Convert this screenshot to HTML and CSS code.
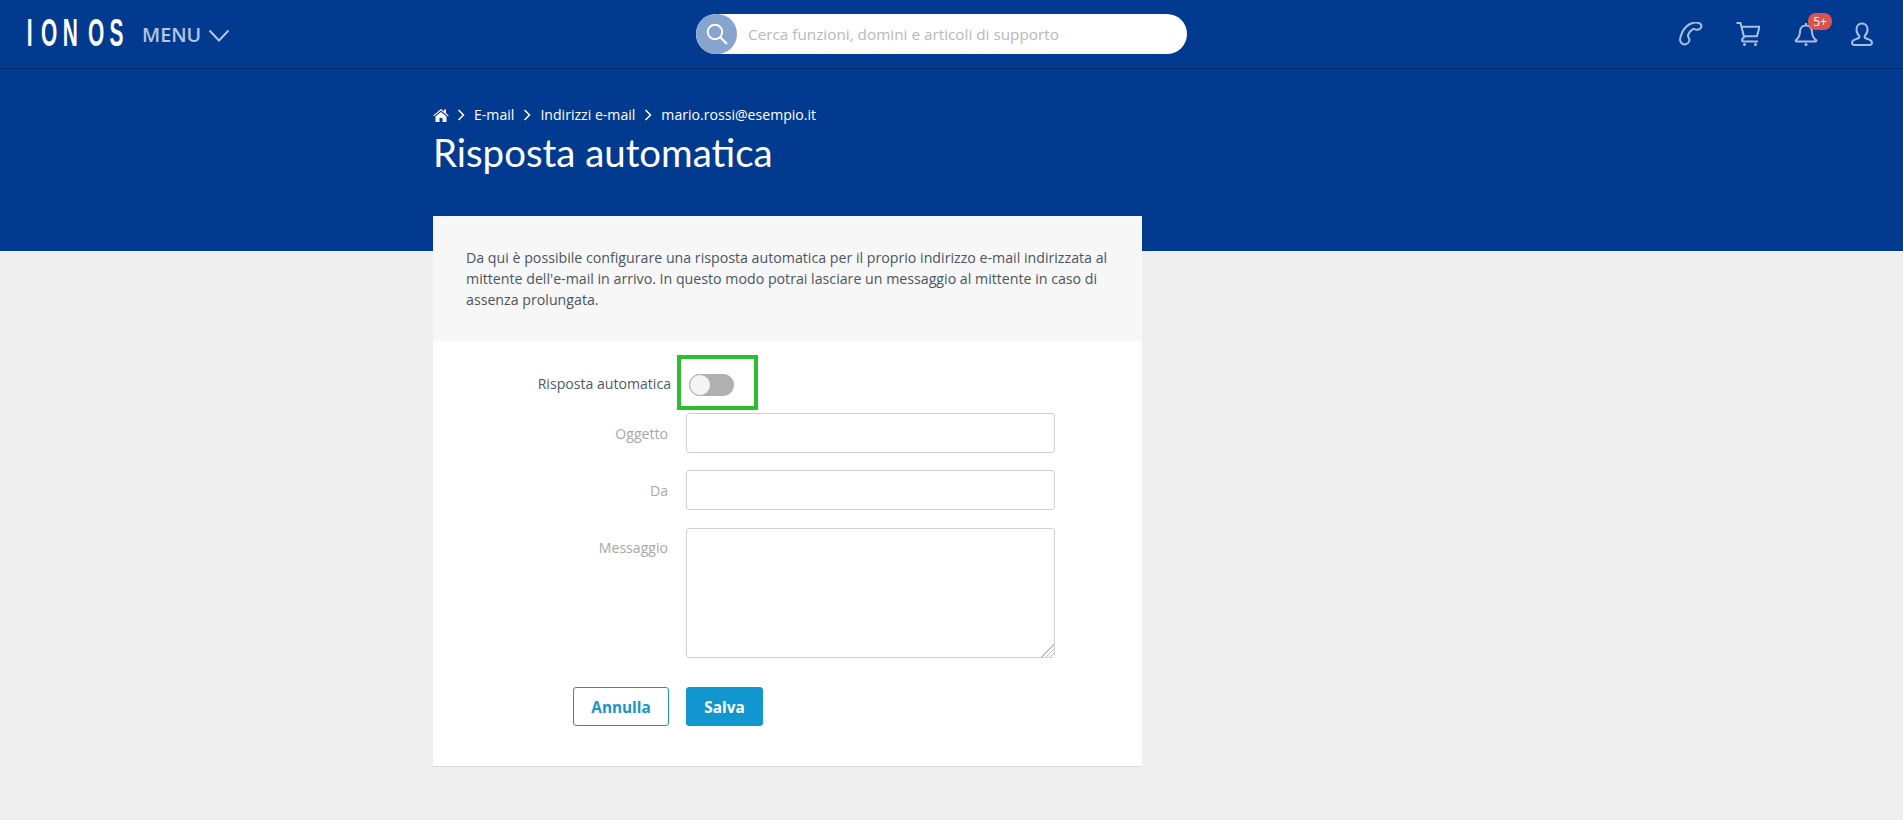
FILE: index.html
```html
<!DOCTYPE html>
<html lang="it">
<head>
<meta charset="utf-8">
<title>Risposta automatica</title>
<link rel="stylesheet" href="styles.css">
</head>
<body>
<header class="topbar">
  <div class="brand">
    <svg class="logo" width="100" height="30" viewBox="0 0 100 30" role="img" aria-label="IONOS">
      <g transform="scale(.55 1)">
        <text x="-2.400 23.600 63 109 148" y="28" class="logo-text">IONOS</text>
      </g>
    </svg>
    <span class="menu-label">MENU</span>
    <svg class="menu-chevron" width="22" height="13" viewBox="0 0 22 13"><path d="M1.500 1.500 11 11.500 20.500 1.500"/></svg>
  </div>
  <div class="search">
    <span class="search-btn">
      <svg width="24" height="24" viewBox="0 0 24 24"><circle cx="10" cy="10" r="7.200"/><path d="M15.200 15.200 22 22"/></svg>
    </span>
    <span class="search-placeholder">Cerca funzioni, domini e articoli di supporto</span>
  </div>
  <nav class="tools">
    <svg class="tool" width="24" height="24" viewBox="0 0 24 24"><path d="M11 2C14.500.5 19 0 21.500 2 23.500 4 22 7.500 18.500 7.800 16.500 8 15.500 6.500 14 7.200 12 8.200 10 10.500 9 13 8.500 14.500 10.500 16 10.500 18 10.500 21 7 23 4.500 22.300 1.500 21.500.5 18.500 1.500 15 3 9.500 7 4 11 2Z"/></svg>
    <svg class="tool" width="24" height="24" viewBox="0 0 24 24"><path d="M.5 1h4l3.800 15M5.500 4.800h18l-2.500 9.400H7.800M8.300 16c-3 .3-3 3.500 0 3.600H22"/><circle class="dot" cx="8.500" cy="22.500" r="1.500"/><circle class="dot" cx="19.500" cy="22.500" r="1.500"/></svg>
    <span class="bell">
      <svg class="tool" width="24" height="24" viewBox="0 0 24 24"><path d="M12 3.500c-4 0-6 2.800-6 6.200 0 4.300-1 5.800-4 8.300-.6.600-.3 1.500.5 1.500h19c.8 0 1.100-.9.500-1.500-3-2.500-4-4-4-8.300 0-3.400-2-6.200-6-6.200ZM12 1v2.500"/><circle class="dot" cx="12" cy="22.500" r="1.500"/></svg>
      <span class="badge">5+</span>
    </span>
    <svg class="tool" width="24" height="24" viewBox="0 0 24 24"><path d="M12 1.500c-3.700 0-5.500 2.800-5.500 6 0 2.500 1 4.700 2.500 6 .6.600.5 2-.3 2.500C6 17.300 2 18 2 20.500c0 1.500 1 2.500 3 2.500h14c2 0 3-1 3-2.500 0-2.500-4-3.200-6.700-4.500-.8-.5-.9-1.900-.3-2.500 1.500-1.300 2.500-3.500 2.500-6 0-3.200-1.800-6-5.500-6Z"/></svg>
  </nav>
</header>

<section class="hero">
  <div class="crumbs">
    <svg class="home" width="16" height="14" viewBox="0 0 16 14"><path d="M8 1 .3 7.400l.8.900L8 2.600l6.900 5.700.8-.9L13 5.200V1.500h-2v2L8 1ZM2.500 8.400V14h4V10h3v4h4V8.400L8 3.900 2.500 8.400Z"/></svg>
    <svg class="crumb-sep" width="8" height="12" viewBox="0 0 8 12"><path d="M1.500 1 6.500 6 1.500 11"/></svg>
    <span>E-mail</span>
    <svg class="crumb-sep" width="8" height="12" viewBox="0 0 8 12"><path d="M1.500 1 6.500 6 1.500 11"/></svg>
    <span>Indirizzi e-mail</span>
    <svg class="crumb-sep" width="8" height="12" viewBox="0 0 8 12"><path d="M1.500 1 6.500 6 1.500 11"/></svg>
    <span>mario.rossi@esempio.it</span>
  </div>
  <h1 class="title">Risposta automatica</h1>
</section>

<main class="card">
  <p class="intro">Da qui è possibile configurare una risposta automatica per il proprio indirizzo e-mail indirizzata al mittente dell'e-mail in arrivo. In questo modo potrai lasciare un messaggio al mittente in caso di assenza prolungata.</p>
  <form class="form">
    <div class="row row-toggle">
      <label class="label label-on">Risposta automatica</label>
      <span class="toggle"><span class="knob"></span></span>
      <span class="highlight"></span>
    </div>
    <div class="row">
      <label class="label" for="subject">Oggetto</label>
      <input class="field" id="subject" type="text">
    </div>
    <div class="row row-second">
      <label class="label" for="from">Da</label>
      <input class="field" id="from" type="text">
    </div>
    <div class="row row-top">
      <label class="label" for="msg">Messaggio</label>
      <textarea class="field area" id="msg"></textarea>
    </div>
    <div class="actions">
      <button class="btn btn-ghost" type="button">Annulla</button>
      <button class="btn btn-solid" type="button">Salva</button>
    </div>
  </form>
</main>
</body>
</html>
```
FILE: styles.css
```css
* { box-sizing: border-box; }
html, body { margin: 0; padding: 0; }
body {
  min-height: 820px;
  background: #efefef;
  font-family: "Open Sans", "Liberation Sans", sans-serif;
  font-size: 14.100px;
  color: #4a5560;
  overflow: hidden;
}
.topbar {
  display: grid;
  grid-template-columns: 696px 491px 1fr;
  align-items: center;
  height: 69px;
  background: #023a8f;
  border-bottom: 1px solid #012a6b;
}
.brand { display: flex; align-items: center; padding-left: 28px; }
.logo { margin-top: -3px; overflow: visible; }
.logo-text {
  font-family: "Liberation Sans", sans-serif;
  font-size: 38px;
  font-weight: 700;
  fill: #fff;
}
.menu-label {
  margin-left: 14px;
  font-size: 19.700px;
  font-weight: 600;
  color: #b4c6e2;
}
.menu-chevron { margin-left: 7px; margin-top: 2px; }
.menu-chevron path { fill: none; stroke: #b4c6e2; stroke-width: 2; }
.search {
  display: flex;
  align-items: center;
  height: 40px;
  background: #fff;
  border-radius: 20px;
}
.search-btn {
  display: flex;
  align-items: center;
  justify-content: center;
  width: 41px;
  height: 40px;
  border-radius: 20px;
  background: #87a4cf;
}
.search-btn svg { fill: none; stroke: #fff; stroke-width: 2; }
.search-placeholder { margin-left: 11px; font-size: 15.300px; color: #b9b9b9; }
.tools {
  display: flex;
  align-items: center;
  justify-content: flex-end;
  gap: 33px;
  padding-right: 29px;
}
.tool { display: block; fill: none; stroke: #a9c0e2; stroke-width: 2; }
.tool .dot { fill: #a9c0e2; stroke: none; }
.bell { position: relative; display: block; left: 1px; }
.badge {
  position: absolute;
  left: 14px;
  top: -9px;
  width: 24px;
  height: 17px;
  border-radius: 8px;
  background: #d9534f;
  color: #fff;
  font-size: 12px;
  line-height: 17px;
  text-align: center;
}
.hero {
  height: 182px;
  padding: 36px 0 0 433px;
  background: #023a8f;
  color: #fff;
}
.crumbs { display: flex; align-items: center; gap: 9px; height: 19px; }
.home { fill: #fff; margin-right: -1px; }
.crumb-sep { fill: none; stroke: #fff; stroke-width: 1.500; }
.title {
  margin: 4px 0 0;
  font-family: "Lato", sans-serif;
  font-size: 38.400px;
  font-weight: 400;
  line-height: 48px;
}
.card {
  position: relative;
  width: 709px;
  margin: -35px 0 0 433px;
  background: #fff;
  border-bottom: 1px solid #dcdcdc;
}
.intro {
  margin: 0;
  padding: 31px 28px 31px 33px;
  background: #f7f7f7;
  font-size: 14.200px;
  line-height: 21px;
}
.form { padding: 33px 0 40px; }
.row {
  display: grid;
  grid-template-columns: 235px 369px;
  column-gap: 18px;
  align-items: center;
  margin-bottom: 17px;
}
.row-second { margin-bottom: 18px; }
.row-top { align-items: start; margin-bottom: 29px; }
.row-top .label { padding-top: 10px; }
.row-toggle {
  position: relative;
  grid-template-columns: 238px 45px;
}
.label { padding-top: 2px; text-align: right; color: #a8a8a8; line-height: 20px; }
.label-on { color: #4f5a63; padding-top: 0; padding-bottom: 2px; }
.toggle {
  display: block;
  width: 45px;
  height: 22px;
  border-radius: 11px;
  background: #b0b0b0;
}
.knob {
  display: block;
  width: 22px;
  height: 22px;
  border-radius: 50%;
  background: #f4f4f4;
  border: 1px solid #b0b0b0;
}
.highlight {
  position: absolute;
  left: 244px;
  top: -19px;
  width: 81px;
  height: 55px;
  border: 4px solid #2dbe2d;
}
.field {
  display: block;
  width: 369px;
  height: 40px;
  background: #fff;
  border: 1px solid #d0d0d0;
  border-radius: 3px;
  font-family: inherit;
}
.area { height: 130px; margin: 0; }
.area::-webkit-resizer {
  background:
    linear-gradient(135deg, #fff 50%, transparent 50%),
    repeating-linear-gradient(135deg, #bdbdbd 0 1px, #fff 1px 3px);
}
.actions { display: flex; gap: 17px; padding-left: 140px; }
.btn {
  height: 39px;
  border-radius: 3px;
  font-family: inherit;
  font-size: 15.300px;
  font-weight: 700;
}
.btn-ghost {
  width: 96px;
  background: #fff;
  border: 1px solid #1a94c8;
  color: #1a94c8;
}
.btn-solid {
  width: 77px;
  background: #1296cf;
  border: 1px solid #1296cf;
  color: #fff;
}
```
